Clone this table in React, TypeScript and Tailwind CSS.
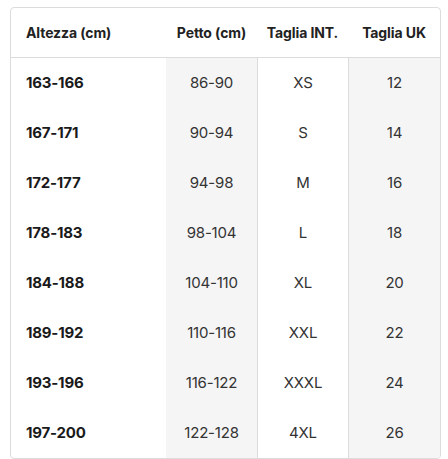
const rows = [
  ['163-166', '86-90', 'XS', '12'],
  ['167-171', '90-94', 'S', '14'],
  ['172-177', '94-98', 'M', '16'],
  ['178-183', '98-104', 'L', '18'],
  ['184-188', '104-110', 'XL', '20'],
  ['189-192', '110-116', 'XXL', '22'],
  ['193-196', '116-122', 'XXXL', '24'],
  ['197-200', '122-128', '4XL', '26'],
]

export default function App() {
  return (
    <div className="min-h-[459px] bg-white pl-[10px] pt-[7px] font-['Inter',sans-serif] text-[#222]">
      <div className="w-[431px] overflow-hidden rounded-[4px] border border-[#dcdcdc]">
        <div className="grid h-[50px] grid-cols-[155px_91px_91px_92px] items-center border-b border-[#dcdcdc] text-[14px] font-bold tracking-[-0.1px]">
          <div className="pl-[15px]">Altezza (cm)</div>
          <div className="text-center">Petto (cm)</div>
          <div className="text-center">Taglia INT.</div>
          <div className="text-center">Taglia UK</div>
        </div>
        <div className="grid grid-cols-[155px_91px_91px_92px] text-[15px] tracking-[-0.2px]">
          <div>
            {rows.map((r) => (
              <div key={r[0]} className="flex h-[50px] items-center pl-[15px] font-bold text-[#1a1a1a]">
                {r[0]}
              </div>
            ))}
          </div>
          <div className="bg-[#f5f5f5]">
            {rows.map((r) => (
              <div key={r[0]} className="flex h-[50px] items-center justify-center text-[#333]">
                {r[1]}
              </div>
            ))}
          </div>
          <div className="border-l border-[#dcdcdc]">
            {rows.map((r) => (
              <div key={r[0]} className="flex h-[50px] items-center justify-center text-[#333]">
                {r[2]}
              </div>
            ))}
          </div>
          <div className="border-l border-[#dcdcdc] bg-[#f5f5f5]">
            {rows.map((r) => (
              <div key={r[0]} className="flex h-[50px] items-center justify-center text-[#333]">
                {r[3]}
              </div>
            ))}
          </div>
        </div>
      </div>
    </div>
  )
}
